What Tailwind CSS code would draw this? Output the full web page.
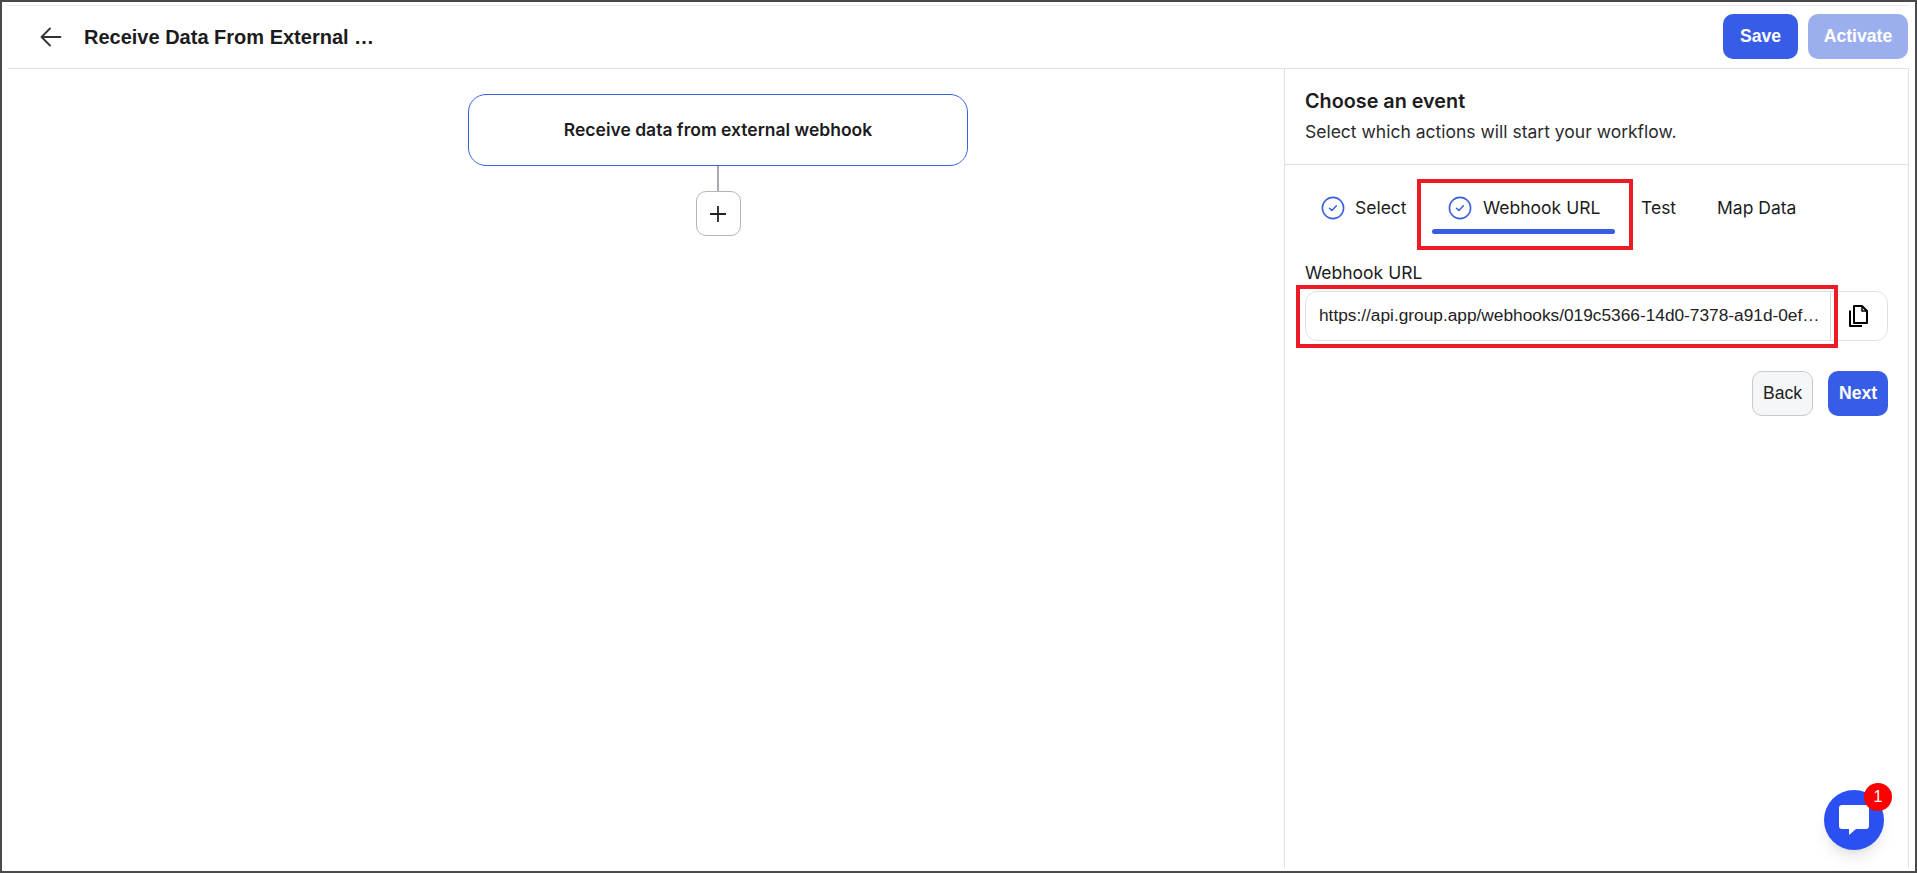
<!DOCTYPE html>
<html lang="en">
  <head>
    <meta charset="UTF-8" />
    <script src="https://cdn.jsdelivr.net/npm/@tailwindcss/browser@4"></script>
    <title>Workflow</title>
  </head>
  <body class="bg-white overflow-hidden font-['Inter',sans-serif] text-[#1c1c1e]">
    <div class="relative w-[1917px] h-[873px] border-2 border-[#4a4a4a] pl-[6px] pr-[6px] pt-[3px] pb-[3px] flex flex-col">
      <!-- Top bar -->
      <header class="h-[64px] shrink-0 border-t border-b border-t-[#f1e2e8] border-b-[#dfdfe4] flex items-center justify-between pr-[1px]">
        <div class="flex items-center">
          <svg class="ml-[32px] w-[22px] h-[22px] text-[#333]" viewBox="0 0 22 22" fill="none" stroke="currentColor" stroke-width="1.8" stroke-linecap="round" stroke-linejoin="round">
            <path d="M20.5 11H1.5M10 2.5 1.5 11l8.5 8.5" />
          </svg>
          <h1 class="ml-[22px] font-['Liberation_Sans',sans-serif] font-bold text-[20px]">Receive Data From External …</h1>
        </div>
        <div class="flex items-center gap-[10px] -mt-[1px]">
          <button class="w-[75px] h-[45px] rounded-[10px] bg-[#375de7] text-white font-['Liberation_Sans',sans-serif] font-bold text-[17.6px]">Save</button>
          <button class="w-[100px] h-[45px] rounded-[10px] bg-[#9bafef] text-white font-['Liberation_Sans',sans-serif] font-bold text-[17.6px]">Activate</button>
        </div>
      </header>

      <main class="flex flex-1 min-h-0">
        <!-- Canvas -->
        <section class="w-[1276px] shrink-0 pl-[460px] pt-[25px]">
          <div class="w-[500px] flex flex-col items-center">
            <div class="w-full h-[72px] border border-[#3b63e0] rounded-[18px] flex items-center justify-center font-semibold text-[17.5px]">
              Receive data from external webhook
            </div>
            <div class="w-[2px] h-[25px] bg-[#a9a9b4]"></div>
            <button class="w-[45px] h-[45px] border border-[#b4b4bd] rounded-[10px] flex items-center justify-center">
              <svg class="w-[18px] h-[18px] text-[#222]" viewBox="0 0 18 18" fill="none" stroke="currentColor" stroke-width="1.8">
                <path d="M9 1v16M1 9h16" />
              </svg>
            </button>
          </div>
        </section>

        <!-- Side panel -->
        <aside class="w-[625px] border-l border-r border-[#dfdfe4]">
          <div class="h-[96px] border-b border-[#dfdfe4] pl-[20px] pt-[18px]">
            <h2 class="text-[19.8px] leading-[28px] font-semibold">Choose an event</h2>
            <p class="text-[17.5px] leading-[24px] mt-[5px] text-[#2b2b2e]">Select which actions will start your workflow.</p>
          </div>

          <!-- Steps -->
          <div class="relative h-[68px] flex items-start pt-[30px] text-[17.5px]">
            <div class="flex items-center ml-[36px] w-[111px]">
              <svg class="w-[24px] h-[24px] text-[#3b5fe0]" viewBox="0 0 24 24" fill="none" stroke="currentColor">
                <circle cx="12" cy="12" r="10.6" stroke-width="1.6" />
                <path d="M8.5 12.2l2.4 2.3 4.5-4.7" stroke-width="1.5" stroke-linecap="round" stroke-linejoin="round" />
              </svg>
              <span class="ml-[10px]">Select</span>
            </div>
            <div class="flex items-center ml-[16px] w-[193px]">
              <svg class="w-[24px] h-[24px] text-[#3b5fe0]" viewBox="0 0 24 24" fill="none" stroke="currentColor">
                <circle cx="12" cy="12" r="10.6" stroke-width="1.6" />
                <path d="M8.5 12.2l2.4 2.3 4.5-4.7" stroke-width="1.5" stroke-linecap="round" stroke-linejoin="round" />
              </svg>
              <span class="ml-[11px]">Webhook URL</span>
            </div>
            <span class="w-[76px]">Test</span>
            <span>Map Data</span>
            <div class="absolute left-[147px] top-[64px] w-[183px] h-[5px] rounded-full bg-[#375de7]"></div>
            <div class="absolute left-[132px] top-[14px] w-[216px] h-[71px] border-[4px] border-[#ed1c24]"></div>
          </div>

          <div class="pl-[20px] pt-[28px]">
            <label class="block text-[17.5px] leading-[24px]">Webhook URL</label>
          </div>

          <div class="relative mx-[20px] mt-[6px] h-[50px] border border-[#e0e0e5] rounded-[12px] flex items-center">
            <div class="w-[525px] shrink-0 h-full border-r border-[#d6d6dc] pl-[13px] pr-[4px] flex items-center font-['Liberation_Sans',sans-serif] text-[17.3px]">
              <span class="block truncate text-[#222]">https://api.group.app/webhooks/019c5366-14d0-7378-a91d-0ef0a1b2c3d4</span>
            </div>
            <svg class="ml-[15px] w-[24px] h-[24px] text-black" viewBox="0 0 24 24" fill="none" stroke="currentColor" stroke-width="2" stroke-linejoin="round">
              <path d="M8 2h8l5 5v12H8z" />
              <path d="M16 2v5h5" stroke-width="1.5" />
              <path d="M4 6.5V22h12" />
            </svg>
            <div class="absolute left-[-10px] top-[-7px] w-[542px] h-[63px] border-[4px] border-[#ed1c24]"></div>
          </div>

          <div class="flex justify-end gap-[15px] mr-[20px] mt-[30px]">
            <button class="w-[61px] h-[45px] rounded-[10px] bg-[#f5f6f8] border border-[#c9c9cf] font-['Liberation_Sans',sans-serif] text-[17.6px] text-[#222]">Back</button>
            <button class="w-[60px] h-[45px] rounded-[10px] bg-[#375de7] text-white font-['Liberation_Sans',sans-serif] font-bold text-[17.6px]">Next</button>
          </div>
        </aside>
      </main>

      <!-- Chat widget -->
      <div class="absolute left-[1822px] top-[788px] w-[60px] h-[60px] rounded-full bg-[#2b4ff0] shadow-lg flex items-center justify-center">
        <svg class="w-[30px] h-[30px] text-white" viewBox="0 0 30 30" fill="currentColor">
          <path d="M3 0h24a3 3 0 0 1 3 3v18a3 3 0 0 1-3 3H17l-7 6v-6H3a3 3 0 0 1-3-3V3a3 3 0 0 1 3-3z" />
        </svg>
        <span class="absolute left-[40px] top-[-7px] w-[28px] h-[28px] rounded-full bg-[#ff0000] text-white flex items-center justify-center text-[16px] font-['Liberation_Sans',sans-serif]">1</span>
      </div>
    </div>
  </body>
</html>
